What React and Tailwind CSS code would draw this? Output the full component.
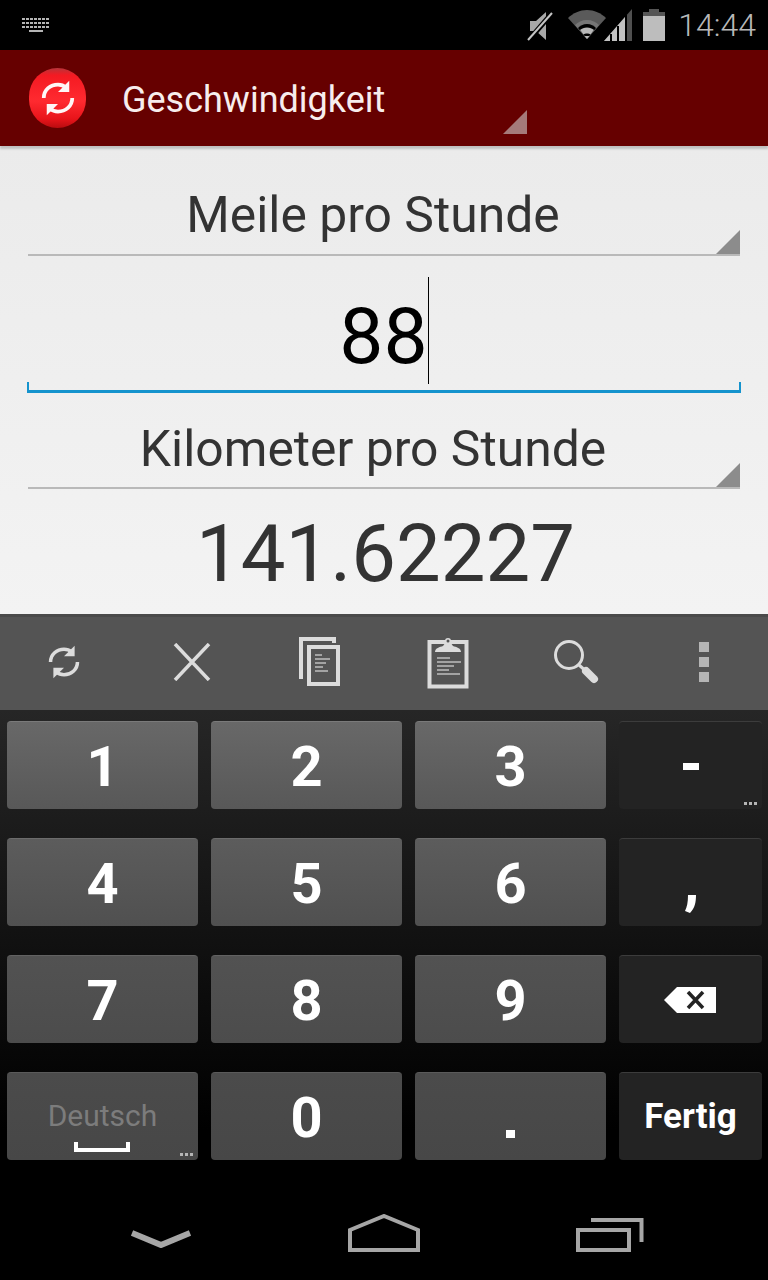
import React from 'react';

function Corner() {
  return (
    <svg width="24" height="24" viewBox="0 0 24 24" className="absolute right-0 bottom-0 fill-[#8c8c8c]">
      <path d="M24 0V24H0Z" />
    </svg>
  );
}

function Spinner({ label, height }) {
  return (
    <div className={`relative mx-[28px] flex items-center justify-center border-b-2 border-[#b9b9b9] ${height}`}>
      <span className="pr-[22px] text-[49.8px] leading-none text-[#333333]">{label}</span>
      <Corner />
    </div>
  );
}

function SyncArrows({ size, className }) {
  return (
    <svg width={size} height={size} viewBox="0 0 48 48" className={className}>
      <g fill="none" stroke="currentColor" strokeWidth="5">
        <path d="M5 24C5 13 14 6 24 6c5 0 8 1.500 11 4" />
        <path d="M43 24c0 11-9 18-19 18-5 0-8-1.500-11-4" />
      </g>
      <path d="M39 1V16H24Z" fill="currentColor" />
      <path d="M9 47V32H24Z" fill="currentColor" />
    </svg>
  );
}

function StatusBar() {
  return (
    <div className="flex h-[50px] items-center justify-between bg-black pl-[21px] pr-[12px]">
      <svg width="30" height="16" viewBox="0 0 30 16" className="text-[#b5b5b5]">
        <path d="M1 1h27v2H1zM1 5h27v2H1zM1 9h27v2H1zM8 13h14v2H8z" fill="currentColor" />
        <path d="M4 0h1v12H4zM8 0h1v12H8zM12 0h1v12h-1zM16 0h1v12h-1zM20 0h1v12h-1zM24 0h1v12h-1z" fill="#000" />
      </svg>
      <div className="flex items-center">
        <svg width="28" height="32" viewBox="0 0 28 32" className="mr-[13px] mt-[2px]">
          <path d="M3 11h6l10-9v28L9 21H3Z" fill="#a8a8a8" />
          <path d="M1 31 26 2" stroke="#000" strokeWidth="5" />
          <path d="M1 30 25 3" stroke="#c4c4c4" strokeWidth="2" />
        </svg>
        <svg width="38" height="30" viewBox="0 0 38 30" className="mt-[-2px]">
          <path d="M19 30 0 9C5 4 12 1 19 1s14 3 19 8Z" fill="#5a5a5a" />
          <path d="M19 30 7 16c3-3 7-5 12-5s9 2 12 5Z" fill="#767676" />
          <path d="M19 30 10 19c2-2 5-4 9-4s7 2 9 4Z" fill="#000" />
          <path d="M19 30 12 21c2-1.500 4-2.500 7-2.500s5 1 7 2.500Z" fill="#b8b8b8" />
          <path d="M19 30 15.500 25.500c1-.8 2-1 3.500-1s2.500.2 3.500 1Z" fill="#000" />
          <path d="M19 30 16.500 27h5Z" fill="#b8b8b8" />
        </svg>
        <svg width="28" height="32" viewBox="0 0 28 32" className="ml-[-2px]">
          <path d="M0 32 28 0V32Z" fill="#4f4f4f" />
          <path d="M0 32 21 8V32Z" fill="#c2c2c2" />
          <path d="M6 25h2v7H6ZM13 17h2v15h-2ZM21 6h2v26h-2Z" fill="#000" />
        </svg>
        <svg width="22" height="32" viewBox="0 0 22 32" className="ml-[11px] mr-[13px]">
          <path d="M6 0h10v3H6Z" fill="#555" />
          <path d="M0 3h22v6H0Z" fill="#555" />
          <path d="M0 7h22v25H0Z" fill="#bdbdbd" />
        </svg>
        <span className="text-[32px] font-light leading-none text-[#b8b8b8]">14:44</span>
      </div>
    </div>
  );
}

function AppBar() {
  return (
    <div className="relative flex h-[96px] items-center bg-[#660000] pl-[29px] shadow-[0_3px_2px_rgba(0,0,0,0.18)]">
      <div className="flex h-[60px] w-[57px] items-center justify-center rounded-full bg-[linear-gradient(180deg,#b8343a_0%,#f41a22_12%,#ff2a30_55%,#e8141a_85%,#b90c10_100%)] text-[#fff6f6]">
        <SyncArrows size={36} />
      </div>
      <div className="relative ml-[36px] flex h-[96px] w-[405px] items-center">
        <span className="mt-[4px] text-[36px] leading-none text-[#f7eded]">Geschwindigkeit</span>
        <svg width="24" height="24" viewBox="0 0 24 24" className="absolute right-0 bottom-[12px]">
          <path d="M24 0V24H0Z" fill="#a57a7a" />
        </svg>
      </div>
    </div>
  );
}

function Converter() {
  return (
    <div className="flex h-[468px] flex-col bg-[linear-gradient(180deg,#ebebeb,#f3f3f3)]">
      <Spinner label="Meile pro Stunde" height="h-[110px] pt-[32px]" />
      <div className="relative mx-[27px] flex h-[137px] items-center justify-center border-b-[3px] border-[#1593cd]">
        <span className="mt-[26px] text-[78.6px] leading-none text-black">88</span>
        <span className="mt-[14px] h-[107px] w-px bg-black" />
        <span className="absolute bottom-0 left-0 h-[8px] w-[2px] bg-[#1593cd]" />
        <span className="absolute bottom-0 right-0 h-[8px] w-[2px] bg-[#1593cd]" />
      </div>
      <Spinner label="Kilometer pro Stunde" height="h-[96px] pt-[20px]" />
      <div className="flex flex-1 items-center justify-center pl-[3px] pt-[5px]">
        <span className="text-[79.6px] leading-none text-[#333333]">141.62227</span>
      </div>
    </div>
  );
}

function ToolIcon({ children }) {
  return <div className="flex items-center justify-center text-[#dcdcdc]">{children}</div>;
}

function Toolbar() {
  return (
    <div className="grid h-[96px] grid-cols-6 border-t-[3px] border-[#4a4a4a] bg-[#545454] pb-[3px]">
      <ToolIcon>
        <SyncArrows size={34} />
      </ToolIcon>
      <ToolIcon>
        <svg width="38" height="38" viewBox="0 0 38 38">
          <path d="M2 1 36 37M36 1 2 37" stroke="currentColor" strokeWidth="3.500" fill="none" />
        </svg>
      </ToolIcon>
      <ToolIcon>
        <svg width="42" height="50" viewBox="0 0 42 50">
          <path d="M2 42V2H35V6" stroke="currentColor" strokeWidth="4" fill="none" />
          <path d="M10 10H39V47H10Z" stroke="currentColor" strokeWidth="4" fill="#545454" />
          <path d="M16 18h7M16 22h15M16 26h11M16 30h8M16 34h13" stroke="#bdbdbd" strokeWidth="1.500" fill="none" />
        </svg>
      </ToolIcon>
      <ToolIcon>
        <svg width="42" height="54" viewBox="0 0 42 54">
          <path d="M2.500 7H39.500V51.500H2.500Z" stroke="currentColor" strokeWidth="4" fill="none" />
          <path d="M8 17c0-4 5-5 8-6 1-1 2-3 2-5a3 3 0 0 1 6 0c0 2 1 4 2 5 3 1 8 2 8 6Z" fill="currentColor" />
          <circle cx="21" cy="6" r="1.500" fill="#545454" />
          <path d="M10 23h13M10 27h24M10 31h17M10 35h12M10 39h23" stroke="#bdbdbd" strokeWidth="1.500" fill="none" />
        </svg>
      </ToolIcon>
      <ToolIcon>
        <svg width="46" height="46" viewBox="0 0 46 46">
          <circle cx="16" cy="16" r="13.500" stroke="currentColor" strokeWidth="3" fill="none" />
          <path d="M33 32 41 40" stroke="currentColor" strokeWidth="8" strokeLinecap="round" />
          <path d="M26 26 34 33" stroke="currentColor" strokeWidth="3" />
        </svg>
      </ToolIcon>
      <div className="flex flex-col items-center justify-center gap-[5px]">
        <span className="h-[10px] w-[10px] bg-[#b5b5b5]" />
        <span className="h-[10px] w-[10px] bg-[#b5b5b5]" />
        <span className="h-[10px] w-[10px] bg-[#b5b5b5]" />
      </div>
    </div>
  );
}

function Dots() {
  return <span className="absolute right-[4px] bottom-[4px] h-[3px] w-[14px] bg-[repeating-linear-gradient(90deg,#b5b5b5_0,#b5b5b5_3px,transparent_3px,transparent_5px)]" />;
}

function Key({ children, dark, row, dots, wide }) {
  const light = [
    'bg-[linear-gradient(180deg,#686868,#585858)] border-t-[#7a7a7a]',
    'bg-[linear-gradient(180deg,#5c5c5c,#505050)] border-t-[#6c6c6c]',
    'bg-[linear-gradient(180deg,#525252,#4c4c4c)] border-t-[#626262]',
    'bg-[linear-gradient(180deg,#4b4b4b,#474747)] border-t-[#5a5a5a]',
  ][row];
  return (
    <div
      className={`relative flex h-[88px] items-center justify-center rounded-[4px] border-t text-white ${
        dark ? 'border-t-[#3c3c3c] bg-[#232323]' : light
      } ${wide ? 'w-[143px]' : 'w-[191px]'}`}
    >
      {children}
      {dots && <Dots />}
    </div>
  );
}

function Digit({ children }) {
  return <span className="mt-[2px] text-[56px] font-bold leading-none">{children}</span>;
}

function Keyboard() {
  const rows = [
    ['1', '2', '3'],
    ['4', '5', '6'],
    ['7', '8', '9'],
  ];
  const side = [
    <span key="m" className="mt-[1px] h-[7px] w-[16px] bg-white" />,
    <svg key="c" width="11" height="18" viewBox="0 0 11 18" className="mt-[42px]">
      <path d="M3 0h8c0 7-1 13-6 18l-5-2c2-4 3-9 3-16Z" fill="#fff" />
    </svg>,
    <svg key="b" width="52" height="26" viewBox="0 0 52 26" className="ml-[-2px]">
      <path d="M13 0H52V26H13L0 13Z" fill="#fff" />
      <path d="M24 5 39 21M39 5 24 21" stroke="#232323" strokeWidth="3.500" fill="none" />
    </svg>,
  ];
  return (
    <div className="flex h-[466px] flex-col gap-[29px] bg-[linear-gradient(180deg,#262626,#000000_90%)] pl-[7px] pt-[11px]">
      {rows.map((row, i) => (
        <div key={row[0]} className="flex gap-[13px]">
          {row.map((d) => (
            <Key key={d} row={i}>
              <Digit>{d}</Digit>
            </Key>
          ))}
          <Key dark wide dots={i === 0}>
            {side[i]}
          </Key>
        </div>
      ))}
      <div className="flex gap-[13px]">
        <Key row={3} dots>
          <div className="flex flex-col items-center">
            <span className="mt-[19px] text-[30px] leading-none text-[#7c7c7c]">Deutsch</span>
            <span className="mt-[11px] h-[10px] w-[56px] border-x-4 border-b-4 border-white" />
          </div>
        </Key>
        <Key row={3}>
          <Digit>0</Digit>
        </Key>
        <Key row={3}>
          <span className="mt-[34px] h-[8px] w-[9px] bg-white" />
        </Key>
        <Key dark wide>
          <span className="text-[35px] font-bold leading-none">Fertig</span>
        </Key>
      </div>
    </div>
  );
}

function NavBar() {
  return (
    <div className="grid h-[104px] grid-cols-[322px_124px_322px] items-center bg-black">
      <div className="flex justify-center">
        <svg width="60" height="18" viewBox="0 0 60 18" className="mt-[21px]">
          <path d="M1 3 30 15 59 3" stroke="#a6a6a6" strokeWidth="6" fill="none" />
        </svg>
      </div>
      <div className="flex justify-center">
        <svg width="72" height="38" viewBox="0 0 72 38" className="mt-[10px]">
          <path d="M2 36V16L36 2 70 16V36Z" stroke="#a6a6a6" strokeWidth="4" fill="none" />
        </svg>
      </div>
      <div className="flex justify-center">
        <svg width="68" height="34" viewBox="0 0 68 34" className="ml-[5px] mt-[14px]">
          <path d="M15 2H65.500V24" stroke="#a6a6a6" strokeWidth="4" fill="none" />
          <path d="M2 12H53V32H2Z" stroke="#a6a6a6" strokeWidth="4" fill="#000" />
        </svg>
      </div>
    </div>
  );
}

export default function App() {
  return (
    <div className="flex h-[1280px] w-[768px] flex-col overflow-hidden bg-black font-['Roboto',sans-serif]">
      <StatusBar />
      <AppBar />
      <Converter />
      <Toolbar />
      <Keyboard />
      <NavBar />
    </div>
  );
}
